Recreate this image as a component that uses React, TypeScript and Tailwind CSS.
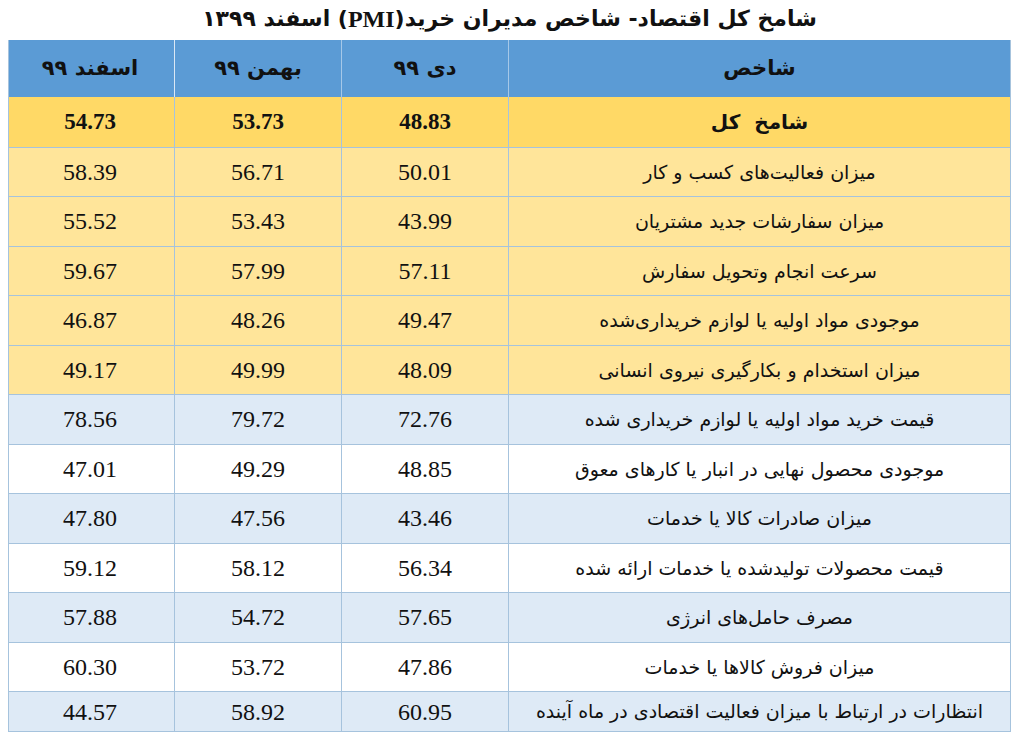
const rows = [
  { label: 'میزان فعالیت‌های کسب و کار', v: ['50.01', '56.71', '58.39'], bg: 'bg-[#ffe59a]' },
  { label: 'میزان سفارشات جدید مشتریان', v: ['43.99', '53.43', '55.52'], bg: 'bg-[#ffe59a]' },
  { label: 'سرعت انجام وتحویل سفارش', v: ['57.11', '57.99', '59.67'], bg: 'bg-[#ffe59a]' },
  { label: 'موجودی مواد اولیه یا لوازم خریداری‌شده', v: ['49.47', '48.26', '46.87'], bg: 'bg-[#ffe59a]' },
  { label: 'میزان استخدام و بکارگیری نیروی انسانی', v: ['48.09', '49.99', '49.17'], bg: 'bg-[#ffe59a]' },
  { label: 'قیمت خرید مواد اولیه یا لوازم خریداری شده', v: ['72.76', '79.72', '78.56'], bg: 'bg-[#deeaf6]' },
  { label: 'موجودی محصول نهایی در انبار یا کارهای معوق', v: ['48.85', '49.29', '47.01'], bg: 'bg-white' },
  { label: 'میزان صادرات کالا یا خدمات', v: ['43.46', '47.56', '47.80'], bg: 'bg-[#deeaf6]' },
  { label: 'قیمت محصولات تولیدشده یا خدمات ارائه شده', v: ['56.34', '58.12', '59.12'], bg: 'bg-white' },
  { label: 'مصرف حامل‌های انرژی', v: ['57.65', '54.72', '57.88'], bg: 'bg-[#deeaf6]' },
  { label: 'میزان فروش کالاها یا خدمات', v: ['47.86', '53.72', '60.30'], bg: 'bg-white' },
  { label: 'انتظارات در ارتباط با میزان فعالیت اقتصادی در ماه آینده', v: ['60.95', '58.92', '44.57'], bg: 'bg-[#deeaf6]' },
];

const cols = 'grid grid-cols-[502px_167px_167px_168px]';
const fa = "font-['DejaVu_Sans',sans-serif]";
const num = "font-['Liberation_Serif',serif]";

export default function App() {
  return (
    <div dir="rtl" className="w-[1019px] h-[741px] bg-white text-[#111]">
      <div className={`h-[40px] flex items-center justify-center pb-[3px] text-[22px] font-bold ${fa}`}>
        شامخ کل اقتصاد- شاخص مدیران خرید(<span className={`${num} text-[24px]`}>PMI</span>) اسفند ۱۳۹۹
      </div>
      <div className="mx-[8px] border-x border-b border-[#a6c3dd]">
        {/* header */}
        <div className={`${cols} h-[57px] bg-[#5b9bd5] text-[21px] font-bold ${fa}`}>
          <div className="flex items-center justify-center border-l border-[#a6c8e8]">شاخص</div>
          <div className="flex items-center justify-center border-l border-[#a6c8e8]">دی ۹۹</div>
          <div className="flex items-center justify-center border-l border-[#dbe8f5]">بهمن ۹۹</div>
          <div className="flex items-center justify-center">اسفند ۹۹</div>
        </div>
        {/* total */}
        <div className={`${cols} h-[49.5px] bg-[#ffd966] font-bold`}>
          <div className={`flex items-center justify-center border-l border-[#a6c3dd] text-[20px] ${fa}`}>شامخ&nbsp; کل</div>
          <div className={`flex items-center justify-center border-l border-[#a6c3dd] text-[23px] ${num}`}>48.83</div>
          <div className={`flex items-center justify-center border-l border-[#a6c3dd] text-[23px] ${num}`}>53.73</div>
          <div className={`flex items-center justify-center text-[23px] ${num}`}>54.73</div>
        </div>
        {rows.map((r, i) => (
          <div
            key={r.label}
            className={`${cols} ${i === rows.length - 1 ? 'h-[40px]' : 'h-[49.5px]'} ${r.bg} border-t border-[#a6c3dd]`}
          >
            <div className={`flex items-center justify-center border-l border-[#a6c3dd] text-[19px] ${fa}`}>{r.label}</div>
            {r.v.map((x, j) => (
              <div
                key={j}
                className={`flex items-center justify-center ${j < 2 ? 'border-l border-[#a6c3dd]' : ''} text-[24px] ${num}`}
              >
                {x}
              </div>
            ))}
          </div>
        ))}
      </div>
    </div>
  );
}
